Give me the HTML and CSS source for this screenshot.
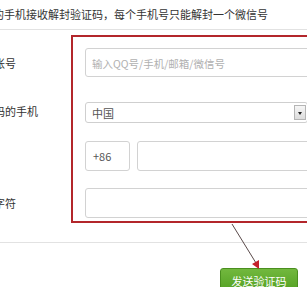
FILE: index.html
```
<!DOCTYPE html>
<html lang="zh-CN">
<head>
    <meta charset="UTF-8">
    <title>解封验证</title>
    <link rel="stylesheet" href="styles.css">
</head>
<body>
    <div class="frame">
        <div class="notice">您的手机接收解封验证码，每个手机号只能解封一个微信号</div>

        <form class="form">
            <div class="row row-account">
                <label class="label">微信帐号</label>
                <input class="field" type="text" placeholder="输入QQ号/手机/邮箱/微信号">
            </div>
            <div class="row row-country">
                <label class="label">验证码的手机</label>
                <div class="select">
                    <span>中国</span>
                    <span class="select-arrow"></span>
                </div>
            </div>
            <div class="row row-phone">
                <span class="label"></span>
                <div class="phone">
                    <div class="code">+86</div>
                    <input class="field" type="text">
                </div>
            </div>
            <div class="row row-captcha">
                <label class="label">验证字符</label>
                <input class="field" type="text">
            </div>
        </form>

        <div class="actions">
            <button class="send" type="button">发送验证码</button>
        </div>

        <!-- annotation drawn over the screenshot -->
        <div class="mark"></div>
        <svg class="pointer" width="307" height="287" viewBox="0 0 307 287">
            <line x1="232" y1="224" x2="256" y2="263" stroke="#5a4a4a" stroke-width="1"/>
            <polygon points="259,269 252,264 259,260" fill="#c4202b"/>
        </svg>
    </div>
</body>
</html>
```

FILE: styles.css
```
html, body {
    margin: 0;
    overflow: hidden;
}

body {
    background: #fff;
    color: #333;
    font-family: "Noto Sans CJK SC", "Liberation Sans", sans-serif;
    font-size: 11px;
}

.frame {
    width: 307px;
    height: 287px;
    overflow: hidden;
    position: relative;
}

.notice {
    height: 30px;
    line-height: 28px;
    margin-left: -18px;
    white-space: nowrap;
    border-bottom: 1px solid #e2e2e2;
    box-sizing: border-box;
}

.form {
    margin: 0 0 0 -28px;
    padding-top: 18px;
    padding-bottom: 24px;
    border-bottom: 1px solid #e2e2e2;
    width: 360px;
}

.row {
    display: grid;
    grid-template-columns: 113px 240px;
    align-items: center;
}

.label {
    white-space: nowrap;
    color: #333;
}

.row-country {
    margin-top: 25px;
}

.row-country .label {
    margin-top: -4px;
}

.row-phone {
    margin-top: 18px;
}

.row-captcha {
    margin-top: 17px;
}

.field {
    box-sizing: border-box;
    height: 29px;
    border: 1px solid #d2d2d2;
    border-radius: 3px;
    padding: 0 6px;
    font-family: inherit;
    font-size: 11px;
    color: #333;
    outline: none;
}

.field::placeholder {
    color: #b0b0b0;
    font-size: 10.5px;
}

.row-captcha .field {
    height: 30px;
}

.select {
    box-sizing: border-box;
    width: 223px;
    height: 21px;
    border: 1px solid #cfcfcf;
    border-radius: 3px;
    display: flex;
    align-items: center;
    justify-content: space-between;
    padding: 0 1px 0 6px;
    color: #555;
}

.select-arrow {
    box-sizing: border-box;
    width: 12px;
    height: 15px;
    border: 1px solid #b5b5b5;
    background: linear-gradient(#f6f6f6, #dcdcdc);
    position: relative;
}

.select-arrow::after {
    content: '';
    position: absolute;
    left: 3px;
    top: 6px;
    border-left: 2px solid transparent;
    border-right: 2px solid transparent;
    border-top: 3px solid #222;
}

.phone {
    display: flex;
    gap: 7px;
}

.code {
    box-sizing: border-box;
    width: 45px;
    height: 30px;
    line-height: 28px;
    border: 1px solid #d2d2d2;
    border-radius: 3px;
    padding-left: 7px;
    color: #555;
}

.phone .field {
    height: 30px;
    flex: 1;
}

.actions {
    display: flex;
    justify-content: flex-end;
    padding: 25px 9px 0 0;
}

.send {
    width: 78px;
    height: 25px;
    border: 1px solid #4a8f1f;
    border-radius: 3px;
    background: linear-gradient(#72b83e, #52a022);
    color: #fff;
    font-family: inherit;
    font-size: 11px;
    padding: 0;
}

.mark {
    position: absolute;
    left: 71px;
    top: 35px;
    width: 300px;
    height: 188px;
    box-sizing: border-box;
    border: 2px solid #b3262b;
}

.pointer {
    position: absolute;
    left: 0;
    top: 0;
}
```
